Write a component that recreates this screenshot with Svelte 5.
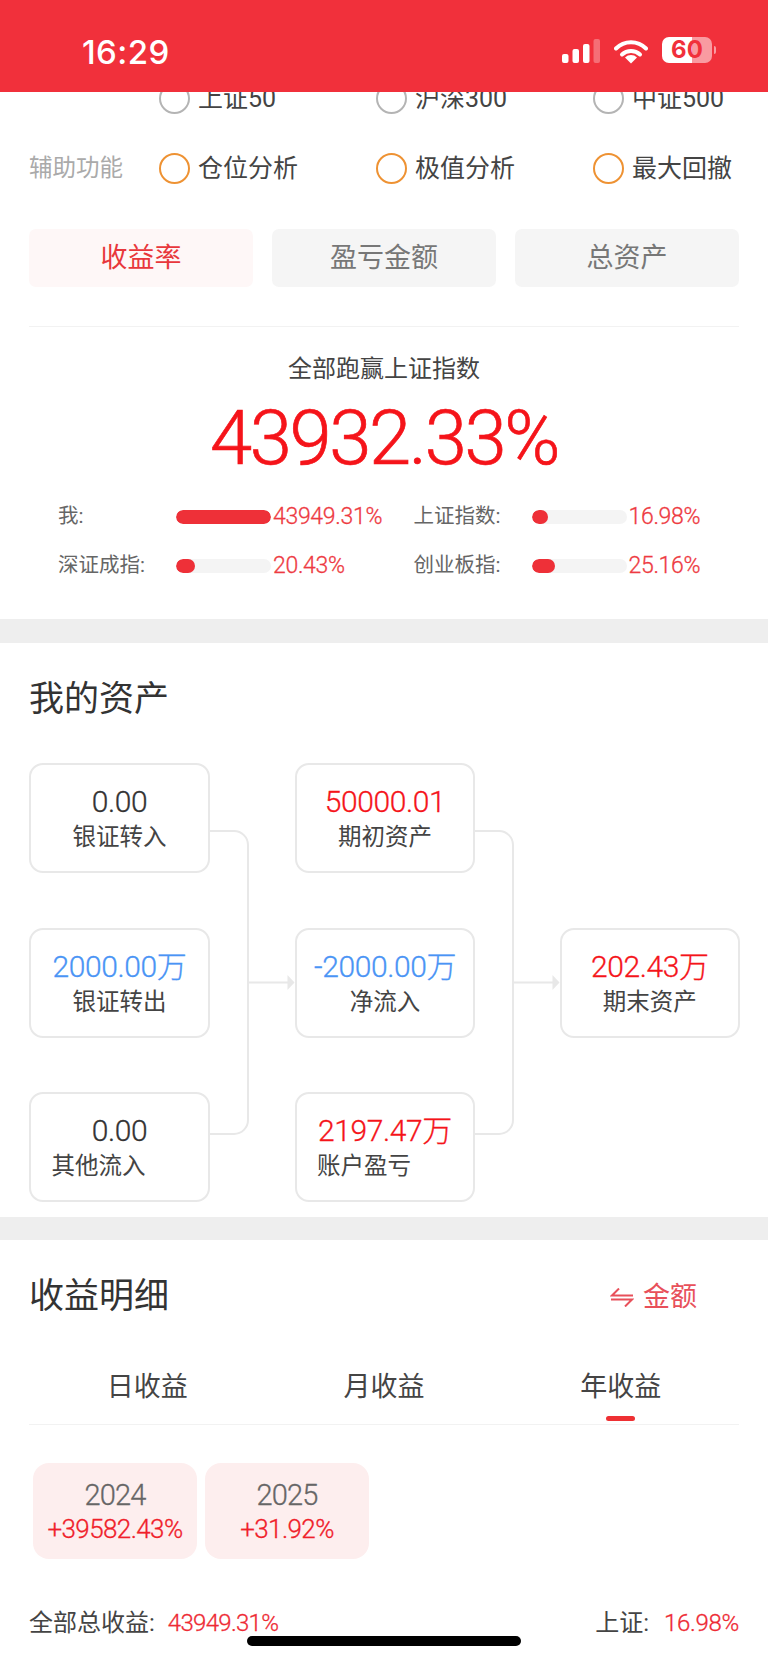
<script>
  const radios = ["上证50", "沪深300", "中证500"];
  const helpers = ["仓位分析", "极值分析", "最大回撤"];
  const tabs = ["收益率", "盈亏金额", "总资产"];
  const bars = [
    { label: "我:", value: "43949.31%", pct: 100 },
    { label: "上证指数:", value: "16.98%", pct: 16.98 },
    { label: "深证成指:", value: "20.43%", pct: 20.43 },
    { label: "创业板指:", value: "25.16%", pct: 25.16 },
  ];
  const periods = ["日收益", "月收益", "年收益"];
  const years = [
    { year: "2024", gain: "+39582.43%" },
    { year: "2025", gain: "+31.92%" },
  ];
</script>

<div class="phone">
  <header class="status">
    <span class="time">16:29</span>
    <svg class="signal" width="39" height="24" viewBox="0 0 39 24">
      <rect x="0" y="15" width="6.500" height="9" rx="2" fill="#fff" />
      <rect x="10.500" y="10" width="6.500" height="14" rx="2" fill="#fff" />
      <rect x="21" y="5" width="6.500" height="19" rx="2" fill="#fff" />
      <rect x="31.500" y="0" width="6.500" height="24" rx="2" fill="#fff" opacity="0.3" />
    </svg>
    <svg class="wifi" width="34" height="25" viewBox="0 0 34 25">
      <path d="M2 9.500a21 21 0 0 1 30 0" fill="none" stroke="#fff" stroke-width="4" stroke-linecap="round" />
      <path d="M8 15.500a13 13 0 0 1 18 0" fill="none" stroke="#fff" stroke-width="4" stroke-linecap="round" />
      <path d="M17 24.500l-6-6a8.500 8.500 0 0 1 12 0z" fill="#fff" />
    </svg>
    <div class="battery">
      <span class="level">60</span>
      <i class="nub"></i>
    </div>
  </header>

  <section class="top">
    <div class="opt-row">
      <span class="opt-label"></span>
      {#each radios as r}
        <div class="opt"><i class="radio"></i><span class="opt-name">{r}</span></div>
      {/each}
    </div>
    <div class="opt-row">
      <span class="opt-label">辅助功能</span>
      {#each helpers as h}
        <div class="opt"><i class="radio orange"></i><span class="opt-name">{h}</span></div>
      {/each}
    </div>

    <div class="tabs">
      {#each tabs as t, i}
        <div class="tab" class:active={i == 0}>{t}</div>
      {/each}
    </div>

    <div class="summary">
      <div class="sum-title">全部跑赢上证指数</div>
      <div class="big">43932.33%</div>
      <div class="bars">
        {#each bars as b}
          <div class="bar-row">
            <span class="bar-label">{b.label}</span>
            <span class="track"><i class="fill" style="width: {b.pct}%"></i></span>
            <span class="bar-val">{b.value}</span>
          </div>
        {/each}
      </div>
    </div>
  </section>

  <section class="assets">
    <h2>我的资产</h2>
    <div class="flow">
      <div class="box c1 r1"><b class="num">0.00</b><span>银证转入</span></div>
      <div class="box c1 r2"><b class="num blue">2000.00万</b><span>银证转出</span></div>
      <div class="box c1 r3"><b class="num">0.00</b><span class="shift">其他流入</span></div>

      <svg class="link l1" width="85" height="439" viewBox="0 0 85 439">
        <path d="M0 68h24a14 14 0 0 1 14 14v275a14 14 0 0 1-14 14H0M38 219.500h41" fill="none" stroke="#e8e8e8" stroke-width="2" />
        <path d="M77.500 212l7 7.500-7 7.500z" fill="#e8e8e8" />
      </svg>

      <div class="box c3 r1"><b class="num red">50000.01</b><span>期初资产</span></div>
      <div class="box c3 r2"><b class="num blue">-2000.00万</b><span>净流入</span></div>
      <div class="box c3 r3"><b class="num red">2197.47万</b><span class="shift">账户盈亏</span></div>

      <svg class="link l2" width="85" height="439" viewBox="0 0 85 439">
        <path d="M0 68h24a14 14 0 0 1 14 14v275a14 14 0 0 1-14 14H0M38 219.500h41" fill="none" stroke="#e8e8e8" stroke-width="2" />
        <path d="M77.500 212l7 7.500-7 7.500z" fill="#e8e8e8" />
      </svg>

      <div class="box c5 r2"><b class="num red">202.43万</b><span>期末资产</span></div>
    </div>
  </section>

  <section class="detail">
    <div class="detail-head">
      <h2>收益明细</h2>
      <div class="switch">
        <svg width="24" height="19" viewBox="0 0 24 19">
          <path d="M23 7.500H2l7-7M1 11.500h21l-7 7" fill="none" stroke="#e8505a" stroke-width="2" />
        </svg>
        <span>金额</span>
      </div>
    </div>

    <div class="periods">
      {#each periods as p, i}
        <div class="period" class:current={i == 2}>{p}</div>
      {/each}
    </div>

    <div class="years">
      {#each years as y}
        <div class="year">
          <span class="y-name">{y.year}</span>
          <span class="y-gain">{y.gain}</span>
        </div>
      {/each}
    </div>

    <div class="totals">
      <div>全部总收益:<em>43949.31%</em></div>
      <div>上证:<em class="wide">16.98%</em></div>
    </div>
  </section>

  <i class="home"></i>
</div>

<style>
  :global(body) {
    margin: 0;
    background: #fff;
  }
  .phone {
    position: relative;
    width: 768px;
    height: 1663px;
    overflow: hidden;
    background: #fff;
    color: #444;
    font-family: Roboto, "Noto Sans CJK SC", sans-serif;
  }
  i {
    display: block;
  }

  .status {
    position: absolute;
    top: 0;
    left: 0;
    right: 0;
    height: 92px;
    background: #f1303b;
    z-index: 2;
  }
  .time {
    position: absolute;
    left: 82px;
    top: 33px;
    font-family: Inter, sans-serif;
    font-size: 33px;
    font-weight: 500;
    line-height: 38px;
    color: #fff;
    letter-spacing: 0.4px;
  }
  .signal {
    position: absolute;
    left: 562px;
    top: 39px;
  }
  .wifi {
    position: absolute;
    left: 614px;
    top: 39px;
  }
  .battery {
    position: absolute;
    left: 662px;
    top: 37px;
    width: 50px;
    height: 26px;
    border-radius: 7px;
    background: linear-gradient(90deg, #fff 0, #fff 60%, #f99ba1 60%);
  }
  .level {
    display: block;
    font-family: Inter, sans-serif;
    font-size: 24px;
    font-weight: 700;
    line-height: 26px;
    text-align: center;
    color: #f1303b;
  }
  .nub {
    position: absolute;
    left: 52px;
    top: 9px;
    width: 2px;
    height: 8px;
    border-radius: 0 2px 2px 0;
    background: #f99ba1;
  }

  .top {
    padding: 83px 29px 0;
    height: 619px;
    box-sizing: border-box;
  }
  .opt-row {
    display: grid;
    grid-template-columns: 130px 217px 217px 1fr;
    grid-template-rows: 31px;
    align-items: center;
    margin-bottom: 39px;
  }
  .opt-label {
    font-size: 23.500px;
    line-height: 31px;
    color: #aaa;
  }
  .opt {
    display: flex;
    align-items: center;
    gap: 8px;
  }
  .radio {
    flex: none;
    width: 31px;
    height: 31px;
    box-sizing: border-box;
    border: 2px solid #b4b4b4;
    border-radius: 50%;
  }
  .radio.orange {
    border-color: #ee9233;
  }
  .opt-name {
    font-size: 25px;
    line-height: 31px;
    white-space: nowrap;
  }

  .tabs {
    display: grid;
    grid-template-columns: repeat(3, 224px);
    gap: 19px;
    margin-top: 45px;
    padding-bottom: 39px;
    border-bottom: 1px solid #f2f2f2;
  }
  .tab {
    height: 58px;
    line-height: 59px;
    text-align: center;
    font-size: 27px;
    color: #777;
    background: #f5f5f5;
    border-radius: 7px;
  }
  .tab.active {
    color: #e8373c;
    background: #fef7f7;
  }

  .summary {
    text-align: center;
  }
  .sum-title {
    margin-top: 25px;
    font-size: 24px;
    line-height: 34px;
  }
  .big {
    margin-top: 6.500px;
    font-size: 76px;
    font-weight: 300;
    line-height: 90px;
    color: #f5141a;
    letter-spacing: -2.400px;
    -webkit-text-stroke: 0.7px #f5141a;
  }
  .bars {
    display: grid;
    grid-template-columns: 355.500px 1fr;
    row-gap: 19px;
    margin-top: 19.500px;
    padding-left: 29px;
    text-align: left;
  }
  .bar-row {
    display: flex;
    align-items: center;
    height: 30px;
  }
  .bar-label {
    width: 118px;
    font-size: 20.500px;
    line-height: 28px;
    margin-bottom: 2px;
    color: #666;
  }
  .track {
    display: block;
    width: 95px;
    height: 14px;
    border-radius: 7px;
    background: #f4f4f4;
    overflow: hidden;
  }
  .fill {
    height: 100%;
    border-radius: 7px;
    background: #ee3038;
  }
  .bar-val {
    margin-left: 2px;
    font-size: 23px;
    font-weight: 300;
    line-height: 28px;
    margin-bottom: 1px;
    letter-spacing: -0.3px;
    color: #ee3a42;
    -webkit-text-stroke: 0.3px #ee3a42;
  }

  .assets {
    border-top: 24px solid #eee;
    height: 598px;
    padding: 0 29px;
    box-sizing: border-box;
  }
  h2 {
    margin: 0;
    font-size: 35px;
    font-weight: 400;
    line-height: 48px;
    color: #333;
  }
  .assets h2 {
    padding-top: 33px;
  }
  .flow {
    display: grid;
    grid-template-columns: 181px 85px 180px 85px 179.500px;
    grid-template-rows: repeat(3, 110px);
    row-gap: 54.500px;
    margin-top: 39px;
  }
  .c1 {
    grid-column: 1;
  }
  .c3 {
    grid-column: 3;
  }
  .c5 {
    grid-column: 5;
  }
  .r1 {
    grid-row: 1;
  }
  .r2 {
    grid-row: 2;
  }
  .r3 {
    grid-row: 3;
  }
  .link {
    grid-row: 1 / 4;
  }
  .l1 {
    grid-column: 2;
  }
  .l2 {
    grid-column: 4;
  }
  .box {
    display: flex;
    flex-direction: column;
    align-items: center;
    box-sizing: border-box;
    padding-top: 19px;
    border: 2px solid #e8e8e8;
    border-radius: 14px;
  }
  .num {
    font-size: 30px;
    font-weight: 300;
    line-height: 36px;
    letter-spacing: -0.4px;
    color: #333;
    -webkit-text-stroke: 0.3px currentColor;
    white-space: nowrap;
  }
  .num.red {
    color: #f5141a;
  }
  .num.blue {
    color: #4a94f5;
  }
  .box span {
    font-size: 23.500px;
    line-height: 35px;
    color: #444;
  }
  .box span.shift {
    margin-right: 42px;
  }

  .detail {
    border-top: 23px solid #eee;
    padding: 33px 29px 0;
  }
  .detail-head {
    display: flex;
    justify-content: space-between;
    align-items: center;
    height: 48px;
  }
  .switch {
    display: flex;
    align-items: center;
    gap: 9px;
    margin-right: 42px;
    font-size: 27px;
    line-height: 40px;
    color: #e8505a;
  }
  .periods {
    display: grid;
    grid-template-columns: repeat(3, 1fr);
    margin-top: 48px;
    border-bottom: 1px solid #f2f2f2;
  }
  .period {
    position: relative;
    height: 55px;
    line-height: 36px;
    text-align: center;
    font-size: 27px;
    color: #444;
  }
  .period.current::after {
    content: "";
    position: absolute;
    left: 50%;
    bottom: 3px;
    width: 29px;
    height: 5px;
    margin-left: -14.500px;
    border-radius: 3px;
    background: #ee3033;
  }
  .years {
    display: flex;
    gap: 8px;
    margin: 38px 0 0 4px;
  }
  .year {
    display: flex;
    flex-direction: column;
    align-items: center;
    width: 164px;
    height: 96px;
    border-radius: 16px;
    background: #fdeeee;
  }
  .y-name {
    margin-top: 15px;
    font-size: 29px;
    font-weight: 300;
    line-height: 34px;
    letter-spacing: -0.8px;
    color: #666;
    -webkit-text-stroke: 0.3px #666;
  }
  .y-gain {
    margin-top: 1px;
    font-size: 26px;
    font-weight: 300;
    line-height: 32px;
    letter-spacing: -0.6px;
    color: #f0202a;
    -webkit-text-stroke: 0.3px #f0202a;
  }
  .totals {
    display: flex;
    justify-content: space-between;
    margin-top: 47px;
    font-size: 24px;
    line-height: 34px;
    color: #444;
  }
  .totals em {
    margin-left: 13px;
    font-style: normal;
    font-weight: 300;
    letter-spacing: -0.7px;
    color: #ee2a34;
    -webkit-text-stroke: 0.3px #ee2a34;
  }
  .totals em.wide {
    margin-left: 15px;
    letter-spacing: -0.3px;
  }

  .home {
    position: absolute;
    left: 247px;
    top: 1636px;
    width: 274px;
    height: 10px;
    border-radius: 5px;
    background: #000;
  }
</style>
